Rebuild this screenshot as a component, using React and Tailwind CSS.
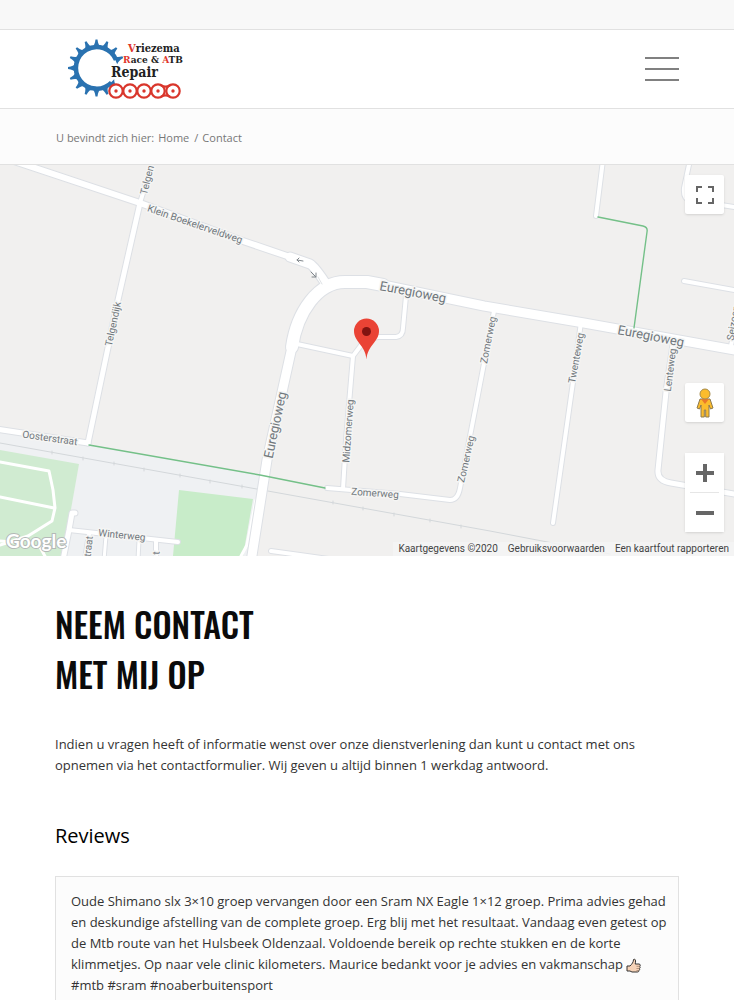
import React, { useState } from "react";

const smallRoads = [
    { d: "M14 161 L140 203 L240 240 L290 257", w: 6 },
    { d: "M153 160 L140 203", w: 4 },
    { d: "M140 203 L118 300 L88 443", w: 5 },
    { d: "M-4 429 L88 443", w: 5 },
    { d: "M290 257 L310 264 Q315 267 326 284", w: 9 },
    { d: "M297 344 L353 356 L365 340 L378 337 L396 337 Q403 336 403 328 L406 296", w: 4 },
    { d: "M353 356 L346 440 L343 489", w: 4 },
    { d: "M327 488 L400 494 L450 500 Q458 500 460 488 L477 400 L494 311", w: 4 },
    { d: "M581 322 L573 382 L553 523", w: 4 },
    { d: "M674 338 L666 392 L658 470 Q657 481 671 483 L740 495", w: 5 },
    { d: "M684 281 L740 291", w: 4 },
    { d: "M690 160 L684 188 Q683 199 690 200 L740 208", w: 4 },
    { d: "M603 160 L596 216", w: 4 },
    { d: "M731 346 L740 300", w: 4 },
    { d: "M75 513 L72 513 L69 530 L63 560", w: 5 },
    { d: "M69 530 L178 542", w: 4 },
    { d: "M89 534 L85 560", w: 4 },
    { d: "M106 536 L104 560", w: 3 },
    { d: "M139 540 L138 560", w: 3 },
    { d: "M156 541 L156 560", w: 4 },
    { d: "M271 551 L300 555 L350 562", w: 4 },
];

const parkPaths = [
    "M0 462 L49 471 L53 490 L55 508 L52 521 L28 536 L0 545",
    "M0 497 L54 508",
    "M0 541 L14 542",
    "M40 547 L46 558",
    "M256 500 L247 545 L241 556",
];

const streets = [
    { text: "Telgendijk", x: 113, y: 324, angle: -78 },
    { text: "Telgen", x: 147, y: 180, angle: -76 },
    { text: "Klein Boekelerveldweg", x: 195, y: 224, angle: 19 },
    { text: "Euregioweg", x: 413, y: 292, angle: 11, big: true },
    { text: "Euregioweg", x: 651, y: 336, angle: 11, big: true },
    { text: "Euregioweg", x: 275, y: 425, angle: -78, big: true },
    { text: "Zomerweg", x: 488, y: 340, angle: -79 },
    { text: "Zomerweg", x: 466, y: 459, angle: -77 },
    { text: "Zomerweg", x: 375, y: 493, angle: 4 },
    { text: "Midzomerweg", x: 348, y: 431, angle: -86 },
    { text: "Twenteweg", x: 576, y: 358, angle: -80 },
    { text: "Lenteweg", x: 670, y: 370, angle: -83 },
    { text: "Seizoen", x: 733, y: 323, angle: -80 },
    { text: "Oosterstraat", x: 50, y: 438, angle: 8 },
    { text: "Winterweg", x: 122, y: 535, angle: 6 },
    { text: "straat", x: 88, y: 549, angle: -84 },
    { text: "t", x: 156, y: 553, angle: -88 },
];

// sixteen-tooth sprocket, open on the side where the text covers it
const teeth = [45, 67.5, 90, 112.5, 135, 157.5, 180, 202.5, 225, 247.5, 270, 292.5, 315, 337.5];

const chain = [50, 64, 78, 92, 107];

const Logo = () => (
    <svg width="124" height="64" viewBox="0 0 124 64" role="img" aria-label="Vriezema Race & ATB Repair">
        <g fill="#2a72b0">
            {teeth.map((angle) => (
                <path key={angle} d="M51 26.500 C53 28.500 55 29.500 59 30 V32 C55 32.500 53 33.500 51 35.500 Z" transform={`rotate(${angle} 30.500 31)`} />
            ))}
        </g>
        <path d="M50 23 A20.800 20.800 0 1 0 45.500 45.500" fill="none" stroke="#2a72b0" strokeWidth="4.500" />
        <g fontFamily="'DejaVu Serif Condensed', 'DejaVu Serif', serif" fontWeight="bold" fill="#222">
            <text x="62" y="15" fontSize="11"><tspan fill="#e0352b">V</tspan>riezema</text>
            <text x="57" y="26" fontSize="10"><tspan fill="#e0352b">R</tspan>ace &amp; <tspan fill="#e0352b">A</tspan>TB</text>
            <text x="45" y="40" fontSize="14">Repair</text>
        </g>
        <g fill="#fff" stroke="#d9362c" strokeWidth="2.200">
            {chain.map((x) => (
                <circle key={x} cx={x} cy="54" r="6.700" />
            ))}
            <path d="M95 48.300 Q99.500 51 104 48.300 M95 59.700 Q99.500 57 104 59.700" fill="none" />
        </g>
        <g fill="#d9362c">
            {chain.map((x) => (
                <circle key={x} cx={x} cy="54" r="1.700" />
            ))}
        </g>
    </svg>
);

const MapCanvas = () => (
    <svg className="block w-full h-full" viewBox="0 165 734 391" preserveAspectRatio="xMidYMid slice" strokeLinecap="round" strokeLinejoin="round">
        <rect x="-700" y="165" width="2200" height="391" fill="#f1f0ef" />
        <path d="M0 430 L88 445 L262 475 L246 560 L0 560 Z" fill="#eff1f3" />
        <path d="M0 450 L79 464 L70 515 L62 556 L0 556 Z" fill="#d0ebd1" />
        <path d="M179 490 L253 499 L243 556 L173 556 Z" fill="#c8ecc9" />
        <path d="M0 443 L240 486 L490 531 L610 554" fill="none" stroke="#d3d7da" strokeWidth="1" />
        <path d="M52 451 v3 M83 457 v3 M114 462 v3 M144 468 v3 M180 474 v3 M210 480 v3 M242 485 v3 M333 501 v3 M363 507 v3 M394 513 v3 M430 519 v3 M461 525 v3" stroke="#d3d7da" />

        <g fill="none" stroke="#fff" strokeWidth="3">
            {parkPaths.map((d) => <path key={d} d={d} />)}
        </g>
        <g fill="none" stroke="#dde0e5">
            {smallRoads.map((road) => <path key={road.d} d={road.d} strokeWidth={road.w + 2} />)}
            <path d="M251 562 L267 460 L292 347" strokeWidth="11" />
            <path d="M292 347 C297 312 318 282 345 282 L367 282 L383 285" strokeWidth="14" />
            <path d="M383 285 L484 306 L584 323 L740 351" strokeWidth="11" />
        </g>
        <g fill="none" stroke="#fff">
            {smallRoads.map((road) => <path key={road.d} d={road.d} strokeWidth={road.w} />)}
            <path d="M251 562 L267 460 L292 347" strokeWidth="9" />
            <path d="M292 347 C297 312 318 282 345 282 L367 282 L383 285" strokeWidth="12" />
            <path d="M383 285 L484 306 L584 323 L740 351" strokeWidth="9" />
        </g>
        <path d="M318 277 L322 284" stroke="#dfe2e5" />
        <g fill="none" stroke="#80868b" strokeWidth="1">
            <path d="M303 261 L297 260 M299 258 L297 260 L299 262" />
            <path d="M311 272 L316 277 M316 273 L316 277 L312 277" />
        </g>
        <g fill="none" stroke="#74c088" strokeWidth="1.400">
            <path d="M89 445 L260 475 L325 488" />
            <path d="M598 217 L643 226 Q648 227 647 232 L634 328" />
        </g>

        <g fontFamily="Roboto, sans-serif" textAnchor="middle" dominantBaseline="central" fill="#70777c" stroke="#f5f5f4" strokeWidth="3" paintOrder="stroke">
            {streets.map((s) => (
                <text key={`${s.text}-${s.x}`} transform={`translate(${s.x} ${s.y}) rotate(${s.angle})`} fontSize={s.big ? 13 : 10}>
                    {s.text}
                </text>
            ))}
        </g>

        <path d="M366.500 359.500 C365.500 345 354 342 354 331 A12.500 12.500 0 0 1 379 331 C379 342 367.500 345 366.500 359.500 Z" fill="#ea4335" />
        <circle cx="366.500" cy="331.500" r="4.500" fill="#811411" />
    </svg>
);

const Pegman = () => (
    <svg width="20" height="32" viewBox="0 0 20 32">
        <path d="M5 12 H15 L18 21 L15.500 22 L14 18 V30 H10.700 V23 H9.300 V30 H6 V18 L4.500 22 L2 21 Z" fill="#fbbc2c" stroke="#8c7a50" strokeWidth="1" />
        <path d="M6 12 H14 L10 17 Z" fill="#e9792b" />
        <circle cx="10" cy="7" r="5" fill="#fbbc2c" stroke="#a58a4a" strokeWidth="1" />
    </svg>
);

const ThumbsUp = () => (
    <svg className="inline-block align-text-bottom" width="15" height="15" viewBox="0 0 15 15" role="img" aria-label="duim omhoog">
        <path d="M1 8 H4 C6 6 7.500 4 7.500 1.500 C9.500 0.500 10 2.500 9.200 6 H13 C14.500 6 14.500 8 13.700 8.300 C14.500 9 14.200 10.300 13.400 10.500 C14 11.300 13.500 12.400 12.800 12.500 C13 13.500 12.300 14 11.500 14 H6 L4 13 H1 Z" fill="#f6d3b8" stroke="#333" strokeWidth="1" strokeLinejoin="round" />
        <path d="M10.500 8.300 H13.500 M10.500 10.500 H13.300 M10.500 12.500 H12.700" stroke="#9a7a65" strokeWidth="0.700" />
    </svg>
);

const mapButton = "flex items-center justify-center w-[39px] h-[39px] bg-white cursor-pointer";

const ContactMap = () => (
    <section className="relative h-[391px] overflow-hidden" aria-label="Kaart">
        <MapCanvas />
        <button type="button" aria-label="Volledig scherm" className={`${mapButton} absolute top-[10px] right-[10px] rounded-xs shadow`}>
            <svg width="18" height="18" viewBox="0 0 18 18" fill="none" stroke="#666" strokeWidth="2">
                <path d="M1 6 V1 H6 M12 1 H17 V6 M17 12 V17 H12 M6 17 H1 V12" />
            </svg>
        </button>
        <div className="absolute right-[10px] bottom-6 flex flex-col gap-[31px]">
            <button type="button" aria-label="Street View" className={`${mapButton} rounded-xs shadow`}>
                <Pegman />
            </button>
            <div className="rounded-xs bg-white shadow">
                <button type="button" aria-label="Inzoomen" className={mapButton}>
                    <svg width="18" height="18" viewBox="0 0 18 18" stroke="#666" strokeWidth="4">
                        <path d="M0 9 H18 M9 0 V18" />
                    </svg>
                </button>
                <div className="mx-[5px] h-px bg-[#e6e6e6]" />
                <button type="button" aria-label="Uitzoomen" className={mapButton}>
                    <svg width="18" height="18" viewBox="0 0 18 18" stroke="#666" strokeWidth="4">
                        <path d="M0 9 H18" />
                    </svg>
                </button>
            </div>
        </div>
        <svg className="absolute left-[3px] bottom-0" width="70" height="28" viewBox="0 0 70 28" role="img" aria-label="Google">
            <text x="3" y="20" fontFamily="Lato, sans-serif" fontSize="19" fontWeight="700" fill="#fff" stroke="#b4b9b7" strokeWidth="2" paintOrder="stroke">Google</text>
        </svg>
        <div className="absolute right-0 bottom-0 flex h-[14px] bg-[#f5f5f5]/80 font-[Roboto,sans-serif] text-[10px] leading-[14px] text-[#444]">
            <span className="px-[5px]">Kaartgegevens ©2020</span>
            <a href="#voorwaarden" className="px-[5px]">Gebruiksvoorwaarden</a>
            <a href="#kaartfout" className="px-[5px]">Een kaartfout rapporteren</a>
        </div>
    </section>
);

const Header = () => {
    const [open, setOpen] = useState(false);

    return (
        <header>
            <div className="h-[30px] border-b border-[#e1e1e1] bg-[#f8f8f8]" />
            <div className="flex h-[79px] items-center justify-between border-b border-[#e1e1e1] bg-white pl-[66px] pr-[55px]">
                <a href="#home"><Logo /></a>
                <button
                    type="button"
                    aria-label="Menu"
                    aria-expanded={open}
                    onClick={() => setOpen(!open)}
                    className="flex w-[34px] cursor-pointer flex-col gap-[9px]"
                >
                    <span className="h-[2px] bg-[#808080]" />
                    <span className="h-[2px] bg-[#808080]" />
                    <span className="h-[2px] bg-[#808080]" />
                </button>
            </div>
        </header>
    );
};

export default function App() {
    return (
        <div className="bg-white font-['Open_Sans',sans-serif] text-[13px] leading-[21px] text-[#333]">
            <Header />
            <nav aria-label="Kruimelpad" className="flex h-14 items-center border-b border-[#e1e1e1] bg-[#fcfcfc] px-14 pt-px text-[11px] text-[#777]">
                <span className="mr-1">U bevindt zich hier:</span>
                <a href="#home">Home</a>
                <span className="ml-[5px] mr-1">/</span>
                <span>Contact</span>
            </nav>
            <ContactMap />
            <main className="px-[55px] pt-[43px]">
                <h1 className="font-[Oswald,sans-serif] text-[34px] font-medium leading-[50px] text-[#0b0b0b]">
                    NEEM CONTACT<br />MET MIJ OP
                </h1>
                <p className="mt-[35px]">
                    Indien u vragen heeft of informatie wenst over onze dienstverlening dan kunt u contact met ons opnemen via het contactformulier. Wij geven u altijd binnen 1 werkdag antwoord.
                </p>
                <h2 className="mt-[46px] text-[20px] font-medium leading-7 text-black">Reviews</h2>
                <article className="mt-[26px] border border-[#e1e1e1] bg-[#fcfcfc] pl-[15px] pr-2 pt-[14px] pb-8">
                    <p>
                        Oude Shimano slx 3×10 groep vervangen door een Sram NX Eagle 1×12 groep. Prima advies gehad en deskundige afstelling van de complete groep. Erg blij met het resultaat. Vandaag even getest op de Mtb route van het Hulsbeek Oldenzaal. Voldoende bereik op rechte stukken en de korte klimmetjes. Op naar vele clinic kilometers. Maurice bedankt voor je advies en vakmanschap <ThumbsUp />
                    </p>
                    <p>#mtb #sram #noaberbuitensport</p>
                </article>
            </main>
        </div>
    );
}
